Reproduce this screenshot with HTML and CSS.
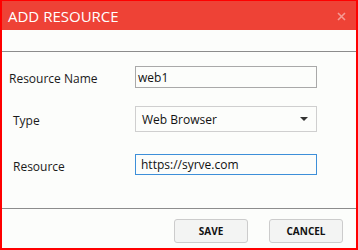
FILE: index.html
```html
<!DOCTYPE html>
<html lang="en">
<head>
    <meta charset="UTF-8">
    <title>Add Resource</title>
    <link rel="stylesheet" href="styles.css">
</head>
<body>
    <div class="dialog">
        <header class="dialog-header">
            <h1 class="dialog-title">ADD RESOURCE</h1>
            <span class="close-btn">
                <svg width="9" height="9" viewBox="0 0 9 9">
                    <path d="M1 1 L8 8 M8 1 L1 8" stroke="#f59a94" stroke-width="1.6" fill="none"/>
                </svg>
            </span>
        </header>

        <div class="dialog-spacer"></div>

        <main class="dialog-body">
            <div class="form-row row-name">
                <label class="field-label">Resource Name</label>
                <div class="field text-input">web1</div>
            </div>
            <div class="form-row row-type">
                <label class="field-label indent">Type</label>
                <div class="field select-input">
                    <span>Web Browser</span>
                    <span class="select-arrow"></span>
                </div>
            </div>
            <div class="form-row row-resource">
                <label class="field-label indent">Resource</label>
                <div class="field text-input focused">https://syrve.com</div>
            </div>
        </main>

        <footer class="dialog-footer">
            <button class="btn">SAVE</button>
            <button class="btn">CANCEL</button>
        </footer>
    </div>
</body>
</html>
```

FILE: styles.css
```css
* {
    margin: 0;
    padding: 0;
    box-sizing: border-box;
}

body {
    font-family: 'Open Sans', 'Noto Sans', sans-serif;
    background: #fcfdfb;
    width: 358px;
    height: 250px;
    overflow: hidden;
}

.dialog {
    width: 358px;
    height: 250px;
    border: 2px solid #ff0000;
    border-top-width: 1px;
    background: #fcfdfb;
    display: flex;
    flex-direction: column;
}

.dialog-header {
    height: 29px;
    background: #ee4236;
    display: flex;
    align-items: center;
    justify-content: space-between;
    padding: 0 10px 0 6px;
}

.dialog-title {
    font-size: 15px;
    font-weight: 400;
    color: #ffffff;
    margin-top: 1px;
}

.close-btn {
    display: flex;
    width: 9px;
    height: 9px;
    margin-top: 1px;
}

.dialog-spacer {
    height: 22px;
    border-bottom: 1px solid #8c8c8c;
}

.dialog-body {
    height: 157px;
    padding-top: 14px;
    border-bottom: 1px solid #8c8c8c;
}

.form-row {
    display: flex;
    align-items: center;
}

.row-type {
    margin-top: 18px;
}

.row-resource {
    margin-top: 22px;
}

.field-label {
    width: 133px;
    padding-left: 7px;
    font-size: 12px;
    color: #1a1a1a;
    margin-top: 3px;
}

.field-label.indent {
    padding-left: 11px;
}

.field {
    width: 182px;
    font-size: 12px;
    color: #111111;
    display: flex;
    align-items: center;
}

.text-input {
    height: 22px;
    border: 1px solid #a9a9a9;
    padding-left: 2px;
}

.text-input.focused {
    height: 21px;
    border-color: #3d8fd9;
    padding-left: 5px;
}

.select-input {
    height: 26px;
    border: 1px solid #cfcfcf;
    padding: 0 8px 0 6px;
    justify-content: space-between;
}

.select-arrow {
    width: 0;
    height: 0;
    border-left: 4px solid transparent;
    border-right: 4px solid transparent;
    border-top: 4px solid #333333;
}

.dialog-footer {
    flex: 1;
    display: flex;
    justify-content: flex-end;
    align-items: flex-start;
    gap: 21px;
    padding: 10px 13px 0 0;
}

.btn {
    width: 74px;
    height: 24px;
    background: #f3f4f3;
    border: 1px solid #cccccc;
    border-radius: 3px;
    font-family: 'Open Sans', 'Noto Sans', sans-serif;
    font-size: 10px;
    font-weight: 700;
    color: #111111;
}
```
